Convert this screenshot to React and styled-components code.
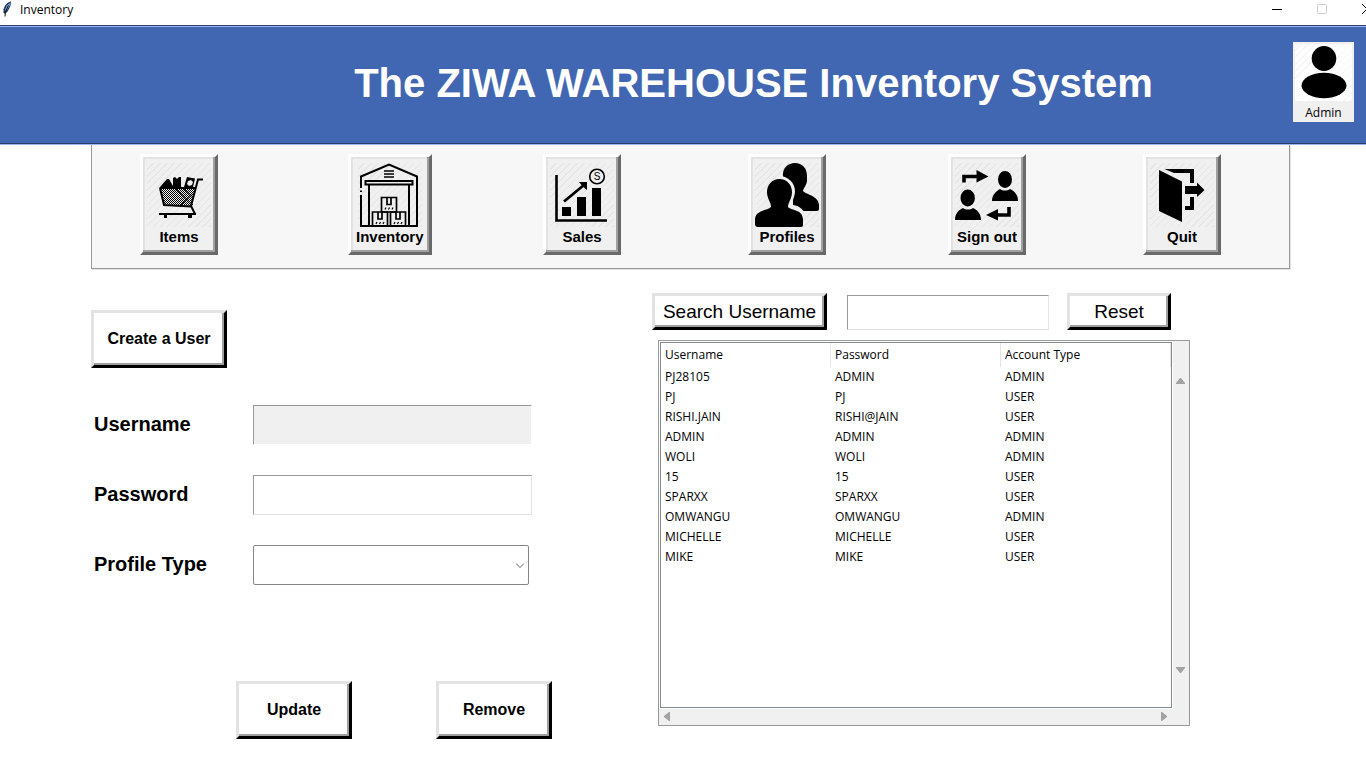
import React from "react";
import styled, { createGlobalStyle, css } from "styled-components";

const GlobalStyle = createGlobalStyle`
  *, *::before, *::after { box-sizing: border-box; }
  body {
    margin: 0;
    background: #ffffff;
    color: #000000;
    font-family: "Liberation Sans", Arial, sans-serif;
  }
  button, input, select { font-family: inherit; color: inherit; }
`;

const uiFont = css`
  font-family: "Open Sans", "Noto Sans", sans-serif;
  font-size: 12px;
  line-height: 16px;
`;

const hatch = (base, line) =>
  `repeating-linear-gradient(135deg, ${base} 0, ${base} 4px, ${line} 4px, ${line} 5px)`;

/* ---------- window title bar ---------- */

const TitleBar = styled.header`
  ${uiFont}
  display: flex;
  align-items: flex-start;
  height: 25px;
  padding: 1px 0 0 2px;
  overflow: hidden;
`;

const WindowName = styled.span`
  flex: 1;
  margin-left: 8px;
  padding-top: 1px;
`;

const WindowControls = styled.div`
  display: flex;
  gap: 35px;
  margin-right: -6px;
`;

const WindowButton = styled.button`
  display: flex;
  width: 10px;
  height: 16px;
  padding: 3px 0 0;
  border: 0;
  background: none;
  svg { flex: none; overflow: visible; }
`;

/* ---------- blue banner ---------- */

const Banner = styled.div`
  display: flex;
  align-items: center;
  height: 120px;
  padding: 0 12px 4px 214px;
  background: #4267b2;
  border: 0 solid;
  border-width: 1px 0;
  border-color: #283e6b transparent #9fb4f0;
  box-shadow: inset 0 1px #9fb4f0, inset 0 -1px #283e6b;
`;

const BannerTitle = styled.h1`
  flex: 1;
  margin: 0;
  text-align: center;
  color: #ffffff;
  font-size: 40px;
  line-height: 48px;
  white-space: nowrap;
`;

const UserCard = styled.button`
  && { ${uiFont} }
  display: flex;
  flex-direction: column;
  align-items: center;
  gap: 4px;
  margin-bottom: 2px;
  width: 61px;
  height: 80px;
  padding: 2px;
  border: 0;
  background: #f0f0f0;
`;

const Avatar = styled.svg`
  flex: none;
  background: ${hatch("#ffffff", "#f5f5f5")};
`;

/* ---------- icon toolbar ---------- */

const Toolbar = styled.nav`
  display: grid;
  grid-template-columns: 208fr 195fr 205fr 200fr 195fr 146fr;
  justify-items: start;
  margin: 0 76px 0 91px;
  padding: 9px 0 13px 48px;
  background: #f7f7f7;
  border: solid #999999;
  border-width: 0 1px 1px;
  box-shadow: 1px 1px #e3e3e3;
`;

const ToolButton = styled.button`
  display: flex;
  flex-direction: column;
  align-items: center;
  gap: 1px;
  min-width: 78px;
  height: 101px;
  padding: 6px 5px 4px;
  background: #f0f0f0;
  border: 3px solid;
  border-color: #ffffff #696969 #696969 #ffffff;
  box-shadow: inset -2px -2px #a0a0a0, inset 2px 2px #e3e3e3;
  font-size: 15px;
  font-weight: bold;
  line-height: 18px;
  white-space: nowrap;
`;

const ToolIcon = styled.svg`
  flex: none;
  width: 64px;
  height: 64px;
  margin: 0 -1px;
  background: ${hatch("#f0f0f0", "#e6e6e6")};
`;

/* ---------- work area ---------- */

const WorkArea = styled.main`
  display: flex;
  gap: 100px;
  padding: 1px 176px 42px 91px;
`;

const FormPane = styled.form`
  flex: 461 1 0;
  min-width: 0;
  display: flex;
  flex-direction: column;
  padding-top: 40px;
`;

const ListPane = styled.section`
  flex: 538 1 0;
  min-width: 0;
  padding-top: 23px;
`;

const BevelButton = styled.button`
  flex: none;
  width: ${(p) => p.$width}px;
  height: ${(p) => (p.$large ? 37 : 58)}px;
  padding: 0;
  background: #ffffff;
  border: 3px solid;
  border-color: #e3e3e3 #000000 #000000 #e3e3e3;
  box-shadow: inset -2px -2px #a0a0a0;
  font-size: ${(p) => (p.$large ? 19 : 16)}px;
  font-weight: ${(p) => (p.$large ? "normal" : "bold")};
  line-height: 24px;
  white-space: nowrap;
`;

const Fields = styled.div`
  display: grid;
  grid-template-columns: 159px 1fr;
  row-gap: 30px;
  align-items: center;
  margin-top: 37px;
  padding: 0 20px 0 3px;
`;

const FieldLabel = styled.label`
  padding-bottom: 2px;
  font-size: 20px;
  font-weight: bold;
  line-height: 24px;
`;

const sunken = css`
  border: 1px solid;
  border-color: #999999 #e3e3e3 #e3e3e3 #999999;
  border-radius: 0;
  outline: 0;
  font-size: 16px;
`;

const TextField = styled.input`
  ${sunken}
  width: 100%;
  height: 40px;
  padding: 0 8px;
  background: #ffffff;
  &:disabled {
    background: #f0f0f0;
    border-right-color: #ffffff;
    border-bottom-color: #ffffff;
  }
`;

const SelectWrap = styled.div`
  position: relative;
  margin-right: 3px;
  svg {
    position: absolute;
    right: 5px;
    top: 18px;
    pointer-events: none;
  }
`;

const Select = styled.select`
  appearance: none;
  display: block;
  width: 100%;
  height: 40px;
  padding: 0 24px 0 8px;
  background: #ffffff;
  border: 1px solid #868686;
  border-radius: 2px;
  font-size: 16px;
`;

const FormActions = styled.div`
  display: flex;
  justify-content: flex-end;
  gap: 84px;
  margin-top: 96px;
`;

const SearchRow = styled.div`
  display: flex;
  align-items: flex-start;
  padding-right: 19px;
`;

const SearchField = styled.input`
  ${sunken}
  flex: 1;
  min-width: 0;
  height: 35px;
  margin: 2px 18px 0 20px;
  padding: 0 8px;
  background: #ffffff;
`;

const ListFrame = styled.div`
  display: grid;
  grid-template-columns: 1fr 16px;
  grid-template-rows: 366px 17px;
  gap: 0 1px;
  margin: 10px 0 0 6px;
  padding: 1px 0 0 1px;
  background: #f0f0f0;
  border: 1px solid #999999;
`;

const ListView = styled.div`
  background: #ffffff;
  border: 1px solid #828790;
  outline: 1px solid #ffffff;
`;

const UserTable = styled.table`
  ${uiFont}
  width: 100%;
  table-layout: fixed;
  border-collapse: separate;
  border-spacing: 0;
  th, td {
    padding: 0 0 0 4px;
    text-align: left;
    font-weight: normal;
  }
  th {
    height: 24px;
    border-right: 1px solid #e5e5e5;
  }
  td { height: 20px; }
`;

const VerticalBar = styled.div`
  display: flex;
  flex-direction: column;
  justify-content: space-between;
  align-items: center;
  padding: 36px 1px 35px 0;
`;

const HorizontalBar = styled.div`
  display: flex;
  justify-content: space-between;
  align-items: center;
  padding: 0 5px 0 4px;
`;

const ArrowButton = styled.button`
  display: flex;
  padding: 0;
  border: 0;
  background: none;
`;

/* ---------- drawings ---------- */

const Feather = () => (
  <svg width="10" height="16" viewBox="0 0 10 16" aria-hidden="true">
    <path d="M9 .5C6 1 2.500 4 1.500 8.500L1.500 11.500L3 13L5.500 10.500L7 8L8.500 4.500Z" fill="#223248" />
    <path d="M8.500 1.500C5.500 3 3.200 6 2.800 10L5.500 8.500L7.800 4.500Z" fill="#69a4e0" />
    <path d="M6.500 4.500L3.500 10.500L3 15.500" stroke="#101820" fill="none" />
  </svg>
);

const CartIcon = () => (
  <ToolIcon viewBox="0 0 64 64" aria-hidden="true">
    <defs>
      <pattern id="mesh" width="2" height="2" patternUnits="userSpaceOnUse">
        <rect width="1" height="1" />
        <rect x="1" y="1" width="1" height="1" />
      </pattern>
    </defs>
    <path d="M13 24L20 16L22 16L26 23V15L28 14L30 16L32 14H34V24Z" />
    <path d="M37 24L40 14L48 15.500L46 24Z" />
    <path d="M41 18l3-1 2 2-1 3-3 1-2-2z" fill="#f0f0f0" />
    <path d="M13 25H49L44.500 43L17 41.500Z" fill="url(#mesh)" />
    <path d="M28 25L46 42M44 25L27 42M36 25L47 35M47 28L34 42" stroke="#000" strokeWidth="1" fill="none" />
    <path d="M56 16.500H51L44 43L48 51M12.500 25H49M13 25L17 42L44 43.500" stroke="#000" strokeWidth="2" fill="none" />
    <path d="M12 51H49" stroke="#000" strokeWidth="2" />
    <rect x="17" y="52" width="3" height="3" />
    <rect x="41" y="52" width="4" height="3" />
  </ToolIcon>
);

const Box = ({ x, y }) => (
  <g transform={`translate(${x} ${y})`}>
    <path d="M0 0H15V14.500H0ZM5.500 0V7H9.500V0" fill="none" stroke="#000" strokeWidth="1.700" />
    <path d="M3.500 12L4.500 10M7 12L8 10M10.500 12L11.500 10" stroke="#000" strokeWidth="1.200" />
  </g>
);

const WarehouseIcon = () => (
  <ToolIcon viewBox="0 0 64 64" aria-hidden="true">
    <path d="M3 25V13.500L31 1.500L59 13.500V63H3V32M3 27.500V29" fill="none" stroke="#000" strokeWidth="2" />
    <path d="M7.500 18H54.500V21.500H7.500ZM11 22V63M51 22V63" fill="none" stroke="#000" strokeWidth="2" />
    <path d="M26 8H36M26 11H36M26 14H36" stroke="#000" strokeWidth="1.500" />
    <Box x={23.5} y={34.5} />
    <Box x={14.5} y={49} />
    <Box x={32.5} y={49} />
  </ToolIcon>
);

const SalesIcon = () => (
  <ToolIcon viewBox="0 0 64 64" aria-hidden="true">
    <path d="M6.500 12V57.500H57" fill="none" stroke="#000" strokeWidth="2.600" />
    <path d="M12 44H21V53H12ZM27 34H36V53H27ZM42 25H51V53H42Z" />
    <path d="M14 38.500L34 22" stroke="#000" strokeWidth="2.800" />
    <path d="M29 19H37V27L34.500 25L31 21.500Z" />
    <circle cx="47" cy="13.500" r="7.300" fill="none" stroke="#000" strokeWidth="1.600" />
    <text x="47" y="17" fontSize="10" fontWeight="normal" textAnchor="middle">S</text>
  </ToolIcon>
);

const ProfilesIcon = () => (
  <ToolIcon viewBox="0 0 64 64" aria-hidden="true">
    <path d="M28 14C27 5 33 0 40 0C47 0 52 5 52 13V17C52 22 49 24 48 28C50 31 64 33 64 42V46C64 47 63 48 62 48H38V28Z" />
    <path
      d="M24.500 13C33 13 40 20 40 28C40 35 36 38 38 42C45 43 50 47 51 55V49H36L24 40Z"
      fill="#f0f0f0"
    />
    <path d="M24.500 16C32 16 37 22 37 29C37 36 33 39 33 44C37 48 48 46 48 57V62C48 63 47.500 64 46 64H3C1 64 0 63 0 61V57C0 47 12 48 16 44C16 39 12 36 12 29C12 22 17 16 24.500 16Z" />
  </ToolIcon>
);

const SignOutIcon = () => (
  <ToolIcon viewBox="0 0 64 64" aria-hidden="true">
    <path d="M9 19.500V13.500H22M54 44V52H42" fill="none" stroke="#000" strokeWidth="3.600" />
    <path d="M21.500 7L33.500 13.500L21.500 19.500ZM43 46L31 52L43 57.500Z" />
    <ellipse cx="50" cy="16.500" rx="7" ry="8.500" />
    <path d="M37 38C37 31 42 28 45 26C48 28 52 28 55 26C59 28 63 31 63 38Z" />
    <ellipse cx="12.700" cy="35" rx="7.200" ry="8.500" />
    <path d="M0 57C0 50 4 47 8 45C11 47 15 47 18 45C22 47 26 50 26 57Z" />
  </ToolIcon>
);

const QuitIcon = () => (
  <ToolIcon viewBox="0 0 64 64" aria-hidden="true">
    <path d="M9 7L32 18.500V59L9 48Z" />
    <path d="M14.500 6H44V20H40V10H24Z" />
    <path d="M40 34H44V47H35V43H40Z" />
    <path d="M35 23H47V19.500L54.500 27L47 34V31H35Z" />
  </ToolIcon>
);

const arrowPaths = {
  up: "M4 0H5L9 5V6H0V5Z",
  down: "M0 0H9V1L5 6H4L0 1Z",
  left: "M6 0V9H5L0 5V4L5 0Z",
  right: "M0 0H1L6 4V5L1 9H0Z",
};

const Arrow = ({ direction }) => {
  const vertical = direction === "up" || direction === "down";
  return (
    <ArrowButton type="button" aria-label={`Scroll ${direction}`}>
      <svg width={vertical ? 9 : 6} height={vertical ? 6 : 9} aria-hidden="true">
        <path d={arrowPaths[direction]} fill="#a3a3a3" />
      </svg>
    </ArrowButton>
  );
};

/* ---------- data ---------- */

const tools = [
  ["Items", CartIcon],
  ["Inventory", WarehouseIcon],
  ["Sales", SalesIcon],
  ["Profiles", ProfilesIcon],
  ["Sign out", SignOutIcon],
  ["Quit", QuitIcon],
];

const users = [
  ["PJ28105", "ADMIN", "ADMIN"],
  ["PJ", "PJ", "USER"],
  ["RISHI.JAIN", "RISHI@JAIN", "USER"],
  ["ADMIN", "ADMIN", "ADMIN"],
  ["WOLI", "WOLI", "ADMIN"],
  ["15", "15", "USER"],
  ["SPARXX", "SPARXX", "USER"],
  ["OMWANGU", "OMWANGU", "ADMIN"],
  ["MICHELLE", "MICHELLE", "USER"],
  ["MIKE", "MIKE", "USER"],
];

export default function App() {
  return (
    <>
      <GlobalStyle />
      <TitleBar>
        <Feather />
        <WindowName>Inventory</WindowName>
        <WindowControls>
          <WindowButton type="button" aria-label="Minimize">
            <svg width="10" height="10"><path d="M0 5.500H10" stroke="#000" /></svg>
          </WindowButton>
          <WindowButton type="button" aria-label="Maximize">
            <svg width="10" height="10"><rect x=".5" y=".5" width="9" height="9" rx="1" fill="none" stroke="#cccccc" /></svg>
          </WindowButton>
          <WindowButton type="button" aria-label="Close">
            <svg width="10" height="10"><path d="M0 0L10 10M10 0L0 10" stroke="#000" /></svg>
          </WindowButton>
        </WindowControls>
      </TitleBar>

      <Banner>
        <BannerTitle>The ZIWA WAREHOUSE Inventory System</BannerTitle>
        <UserCard type="button">
          <Avatar width="57" height="57" viewBox="0 0 57 57" aria-hidden="true">
            <ellipse cx="29" cy="14.500" rx="12.300" ry="12.500" />
            <ellipse cx="29" cy="41.500" rx="22.500" ry="12.700" />
          </Avatar>
          Admin
        </UserCard>
      </Banner>

      <Toolbar>
        {tools.map(([name, Icon]) => (
          <ToolButton key={name} type="button">
            <Icon />
            {name}
          </ToolButton>
        ))}
      </Toolbar>

      <WorkArea>
        <FormPane onSubmit={(e) => e.preventDefault()}>
          <BevelButton type="button" $width={136}>Create a User</BevelButton>
          <Fields>
            <FieldLabel htmlFor="username">Username</FieldLabel>
            <TextField id="username" type="text" disabled />
            <FieldLabel htmlFor="password">Password</FieldLabel>
            <TextField id="password" type="text" />
            <FieldLabel htmlFor="profile">Profile Type</FieldLabel>
            <SelectWrap>
              <Select id="profile" defaultValue="">
                <option value="" />
                <option value="ADMIN">ADMIN</option>
                <option value="USER">USER</option>
              </Select>
              <svg width="8" height="6" aria-hidden="true">
                <path d="M0 .5L4 4.500L8 .5" fill="none" stroke="#606060" />
              </svg>
            </SelectWrap>
          </Fields>
          <FormActions>
            <BevelButton type="button" $width={116}>Update</BevelButton>
            <BevelButton type="button" $width={116}>Remove</BevelButton>
          </FormActions>
        </FormPane>

        <ListPane>
          <SearchRow>
            <BevelButton type="button" $large $width={175}>Search Username</BevelButton>
            <SearchField type="text" aria-label="Search Username" />
            <BevelButton type="button" $large $width={104}>Reset</BevelButton>
          </SearchRow>
          <ListFrame>
            <ListView>
              <UserTable>
                <thead>
                  <tr>
                    <th scope="col">Username</th>
                    <th scope="col">Password</th>
                    <th scope="col">Account Type</th>
                  </tr>
                </thead>
                <tbody>
                  {users.map((row) => (
                    <tr key={row[0]}>
                      {row.map((cell, i) => (
                        <td key={i}>{cell}</td>
                      ))}
                    </tr>
                  ))}
                </tbody>
              </UserTable>
            </ListView>
            <VerticalBar>
              <Arrow direction="up" />
              <Arrow direction="down" />
            </VerticalBar>
            <HorizontalBar>
              <Arrow direction="left" />
              <Arrow direction="right" />
            </HorizontalBar>
          </ListFrame>
        </ListPane>
      </WorkArea>
    </>
  );
}
